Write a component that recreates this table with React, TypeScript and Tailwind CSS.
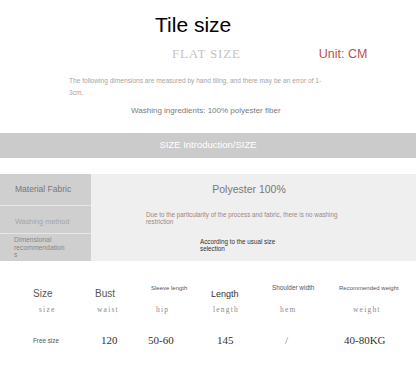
const sans = { fontFamily: '"Liberation Sans", Arial, sans-serif' };

export default function App() {
  return (
    <div className="w-[416px] h-[379px] bg-white overflow-hidden font-['Liberation_Sans',Arial,sans-serif]">
      {/* heading */}
      <div className="pt-[12px] pl-[155px] text-[21px] leading-[26px] text-black">Tile size</div>
      <div className="flex items-center mt-[9px] h-[14px]">
        <span className="ml-[172px] font-['Liberation_Serif',serif] text-[13px] text-[#c4c4c4] tracking-[0.8px]">FLAT SIZE</span>
        <span className="ml-[78px] text-[12.5px] text-[#c0504d]">Unit: CM</span>
      </div>
      <p className="mt-[14px] ml-[69px] w-[262px] text-[6.6px] leading-[12px] text-[#a5a5a5]">
        The following dimensions are measured by hand tiling, and there may be an error of 1-3cm.
      </p>
      <div className="mt-[7px] ml-[131px] text-[8px] leading-[10px] text-[#7a7a7a]">Washing ingredients: 100% polyester fiber</div>

      {/* band */}
      <div className="mt-[17px] h-[25px] bg-[#cbcbcb] flex items-center justify-center text-[9.5px] text-white">
        SIZE Introduction/SIZE
      </div>

      {/* material table */}
      <div className="mt-[16px] grid grid-cols-[91px_1fr] grid-rows-[32px_28px_27px] bg-[#efefef]">
        <div className="bg-[#cfcfcf] border-b border-[#e6e6e6] flex items-center pl-[15px] text-[8.5px] text-[#777]">Material Fabric</div>
        <div className="flex items-center justify-center pr-[9px] text-[10.5px] text-[#777]">Polyester 100%</div>
        <div className="bg-[#cfcfcf] border-b border-[#e6e6e6] flex items-end pb-[5px] pl-[15px] text-[7.3px] text-[#a5a5a5]">Washing method</div>
        <div className="pl-[55px] pt-[5px] pr-[60px] text-[6.3px] leading-[7px] text-[#a08585]" style={sans}>
          Due to the particularity of the process and fabric, there is no washing restriction
        </div>
        <div className="bg-[#cfcfcf] pl-[14px] pt-[2px] w-[91px] text-[6.8px] leading-[7.5px] text-[#888] overflow-hidden">
          Dimensional<br />recommendation<br />s
        </div>
        <div className="pl-[109px] pt-[4px] w-[190px] text-[6.3px] leading-[7px] text-[#333]">
          According to the usual size selection
        </div>
      </div>

      {/* size chart */}
      <div className="mt-[27px] pl-[33px] grid grid-cols-[62px_56px_60px_61px_67px_1fr] items-end text-[#555]">
        <div className="text-[10px] leading-[12px]">Size</div>
        <div className="text-[10px] leading-[12px]">Bust</div>
        <div className="text-[6px] leading-[8px] self-start mt-[-4px]">Sleeve length</div>
        <div className="text-[9px] leading-[12px] text-[#333]">Length</div>
        <div className="text-[6.4px] leading-[8px] self-start mt-[-4px]">Shoulder width</div>
        <div className="text-[6px] leading-[8px] self-start mt-[-4px] whitespace-nowrap">Recommended weight</div>
      </div>
      <div className="mt-[5px] pl-[33px] grid grid-cols-[62px_56px_60px_61px_67px_1fr] font-['Liberation_Serif',serif] text-[7.5px] leading-[9px] tracking-[1.2px] text-[#8a8a8a]">
        <div className="pl-[6px]">size</div>
        <div className="pl-[2px]">waist</div>
        <div className="pl-[5px]">hip</div>
        <div className="pl-[2px]">length</div>
        <div className="pl-[8px]">hem</div>
        <div className="pl-[14px]">weight</div>
      </div>
      <div className="mt-[18px] pl-[33px] grid grid-cols-[62px_56px_60px_61px_67px_1fr] items-center font-['Liberation_Serif',serif] text-[11px] text-[#333]">
        <div className="text-[6.3px] text-[#555]" style={sans}>Free size</div>
        <div className="pl-[6px]">120</div>
        <div className="ml-[-3px]">50-60</div>
        <div className="pl-[6px]">145</div>
        <div className="pl-[13px] text-[#777]">/</div>
        <div className="pl-[5px]">40-80KG</div>
      </div>
    </div>
  );
}
